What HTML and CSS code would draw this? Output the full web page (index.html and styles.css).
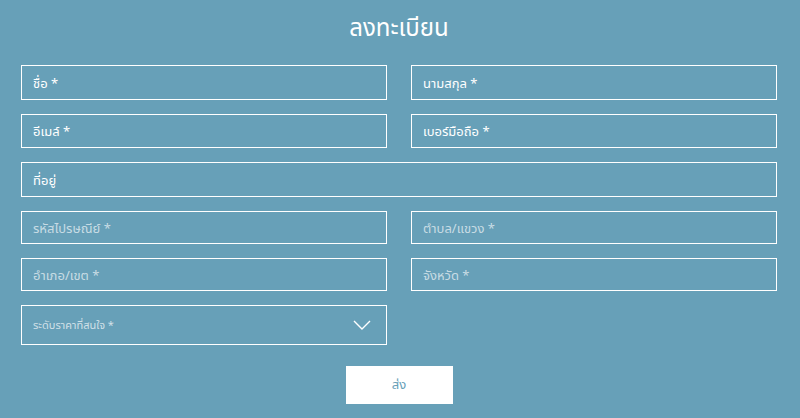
FILE: index.html
```html
<!DOCTYPE html>
<html lang="th">
<head>
    <meta charset="UTF-8">
    <meta name="viewport" content="width=device-width, initial-scale=1.0">
    <title>ลงทะเบียน</title>
    <link rel="stylesheet" href="styles.css">
</head>
<body>
    <div class="container">
        <h1 class="titulo">ลงทะเบียน</h1>
        <form class="form-registro">
            <input type="text" class="campo h35" placeholder="ชื่อ *">
            <input type="text" class="campo h35" placeholder="นามสกุล *">
            <input type="email" class="campo h34" placeholder="อีเมล์ *">
            <input type="tel" class="campo h34" placeholder="เบอร์มือถือ *">
            <input type="text" class="campo h35 full" placeholder="ที่อยู่">
            <input type="text" class="campo h33 fraco" placeholder="รหัสไปรษณีย์ *">
            <input type="text" class="campo h33 fraco" placeholder="ตำบล/แขวง *">
            <input type="text" class="campo h33 fraco" placeholder="อำเภอ/เขต *">
            <input type="text" class="campo h33 fraco" placeholder="จังหวัด *">
            <div class="select-box">
                <span>ระดับราคาที่สนใจ *</span>
                <svg width="18" height="10" viewBox="0 0 18 10">
                    <polyline points="1,1 9,9 17,1" fill="none" stroke="#fff" stroke-width="1.4"/>
                </svg>
            </div>
            <div class="acoes full">
                <button type="submit">ส่ง</button>
            </div>
        </form>
    </div>
</body>
</html>
```

FILE: styles.css
```css
* {
    box-sizing: border-box;
}

body {
    font-family: 'Noto Sans', 'Noto Sans Thai', sans-serif;
    background: #67a0b8;
    margin: 0;
    color: #fff;
}

.container {
    width: 756px;
    margin-left: 21px;
    padding-top: 10px;
}

.titulo {
    text-align: center;
    margin: 0 0 21px;
    font-size: 24px;
    font-weight: normal;
    line-height: 34px;
    color: #fff;
}

.form-registro {
    display: grid;
    grid-template-columns: 366px 366px;
    column-gap: 24px;
    row-gap: 14px;
}

.campo {
    display: block;
    width: 100%;
    margin: 0;
    padding: 0 11px;
    border: 1px solid #fff;
    border-radius: 0;
    background: transparent;
    font-family: inherit;
    font-size: 13px;
    color: #fff;
    outline: none;
}

.campo::placeholder {
    color: #fff;
}

.campo.fraco::placeholder {
    color: rgba(255, 255, 255, 0.65);
}

.h35 { height: 35px; }
.h34 { height: 34px; }
.h33 { height: 33px; }

.full {
    grid-column: 1 / 3;
}

.select-box {
    height: 40px;
    border: 1px solid #fff;
    display: flex;
    align-items: center;
    justify-content: space-between;
    padding: 0 15px 0 11px;
    font-size: 11px;
    color: rgba(255, 255, 255, 0.7);
}

.acoes {
    display: flex;
    justify-content: center;
    padding-top: 7px;
}

button {
    width: 107px;
    height: 38px;
    background: #fff;
    border: none;
    border-radius: 0;
    color: #67a0b8;
    font-family: inherit;
    font-size: 13px;
    cursor: pointer;
}
```
